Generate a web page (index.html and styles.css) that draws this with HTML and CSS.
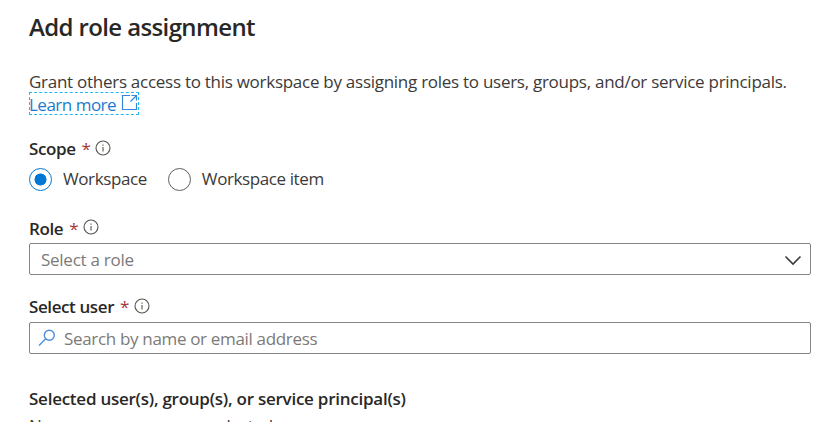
FILE: index.html
```html
<!DOCTYPE html>
<html lang="en">
<head>
<meta charset="utf-8">
<title>Add role assignment</title>
<link rel="stylesheet" href="styles.css">
</head>
<body>
<main class="panel">
  <h1 class="title">Add role assignment</h1>
  <p class="intro">Grant others access to this workspace by assigning roles to users, groups, and/or service principals.</p>
  <a class="learn" href="#"><span class="learn-text">Learn more</span>
    <svg class="external" viewBox="0 0 17 17"><path d="M9 1.500H1.500v14h14V9M10.500 1.500h5v5M15.500 1.500L9.500 7.500"/></svg>
  </a>

  <div class="label label-scope"><span>Scope</span><span class="required">*</span>
    <svg class="info" viewBox="0 0 16 16"><circle cx="8" cy="8" r="7"/><path d="M8 7v4.500M8 4.500v1.200"/></svg>
  </div>
  <div class="radios">
    <div class="radio"><span class="dot checked"></span><span>Workspace</span></div>
    <div class="radio"><span class="dot"></span><span>Workspace item</span></div>
  </div>

  <div class="label label-role"><span>Role</span><span class="required">*</span>
    <svg class="info" viewBox="0 0 16 16"><circle cx="8" cy="8" r="7"/><path d="M8 7v4.500M8 4.500v1.200"/></svg>
  </div>
  <div class="field select"><span class="value">Select a role</span>
    <svg class="chevron" viewBox="0 0 18 11"><path d="M1.500 1.500L9 9l7.500-7.500"/></svg>
  </div>

  <div class="label label-user"><span>Select user</span><span class="required">*</span>
    <svg class="info" viewBox="0 0 16 16"><circle cx="8" cy="8" r="7"/><path d="M8 7v4.500M8 4.500v1.200"/></svg>
  </div>
  <div class="field search">
    <svg class="magnifier" viewBox="0 0 18 18"><circle cx="11.300" cy="6.200" r="5"/><path d="M7.700 9.800L1 16.500"/></svg>
    <span class="value hint">Search by name or email address</span>
  </div>

  <h2 class="selected">Selected user(s), group(s), or service principal(s)</h2>
  <p class="empty">No users or groups are selected</p>
</main>
</body>
</html>
```
FILE: styles.css
```css
* { box-sizing: border-box; }
body { margin: 0; background: #fff; overflow: hidden; }
.panel {
  height: 422px;
  padding: 11px 25px 0 29px;
  overflow: hidden;
  font-family: "Open Sans", "Noto Sans", sans-serif;
  font-size: 17px;
  line-height: 22px;
  letter-spacing: -0.27px;
  color: #3b3a39;
  white-space: nowrap;
}
h1, h2, p { margin: 0; }
svg { fill: none; flex: none; }
.title { height: 32px; font-size: 24px; line-height: 31px; font-weight: 600; letter-spacing: -0.62px; color: #292827; }
.intro { margin-top: 28px; height: 22px; }
.learn {
  display: flex;
  align-items: center;
  width: 110px;
  height: 23px;
  margin-top: -1px;
  color: #1a7bd0;
  text-decoration: none;
  outline: 1px dashed #1fb8f0;
  outline-offset: -1px;
}
.learn-text { padding-top: 2px; letter-spacing: -0.5px; }
.external { width: 17px; height: 17px; margin-left: 5px; margin-top: -2px; stroke: #3485dc; stroke-width: 1.2; }
.label { display: flex; align-items: center; height: 22px; font-weight: 600; letter-spacing: -0.4px; color: #292827; }
.required { width: 8px; margin-left: 6px; color: #a4373a; font-weight: 400; }
.info { width: 16px; height: 16px; margin-left: 5.5px; margin-top: -3px; stroke: #55534f; stroke-width: 1.1; }
.label-scope { margin-top: 23px; }
.radios { display: flex; gap: 21px; height: 24px; margin-top: 7px; letter-spacing: -0.4px; }
.radio { display: flex; align-items: center; gap: 11px; }
.dot { width: 23px; height: 23px; border: 1px solid #605e5c; border-radius: 50%; }
.checked { border-color: #0078d4; background: radial-gradient(circle, #0078d4 5.7px, transparent 6.3px); }
.label-role { margin-top: 27px; }
.label-role .info { margin-top: -4px; }
.field { display: flex; align-items: center; width: 782px; height: 32px; border: 1px solid #868482; border-radius: 2px; color: #7c7a78; }
.select { margin-top: 3px; justify-content: space-between; padding: 0 8px 0 11px; }
.value { padding-top: 1px; }
.hint { letter-spacing: -0.33px; }
.chevron { width: 18px; height: 11px; margin-top: 3px; stroke: #3b3a39; stroke-width: 1.6; }
.label-user { margin-top: 21px; }
.search { margin-top: 4px; padding-left: 8px; }
.magnifier { width: 18px; height: 18px; margin-right: 8px; stroke: #4b8fde; stroke-width: 1.4; }
.selected { margin-top: 34px; height: 22px; font-size: 17px; font-weight: 600; letter-spacing: -0.25px; color: #292827; }
.empty { margin-top: 5px; }
```
